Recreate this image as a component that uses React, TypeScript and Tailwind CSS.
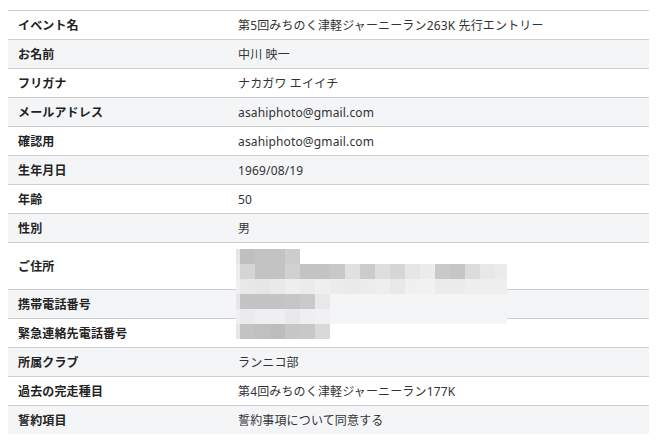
const rows: { label: string; value: string; tall?: boolean }[] = [
  { label: 'イベント名', value: '第5回みちのく津軽ジャーニーラン263K 先行エントリー' },
  { label: 'お名前', value: '中川 映一' },
  { label: 'フリガナ', value: 'ナカガワ エイイチ' },
  { label: 'メールアドレス', value: 'asahiphoto@gmail.com' },
  { label: '確認用', value: 'asahiphoto@gmail.com' },
  { label: '生年月日', value: '1969/08/19' },
  { label: '年齢', value: '50' },
  { label: '性別', value: '男' },
  { label: 'ご住所', value: '', tall: true },
  { label: '携帯電話番号', value: '' },
  { label: '緊急連絡先電話番号', value: '' },
  { label: '所属クラブ', value: 'ランニコ部' },
  { label: '過去の完走種目', value: '第4回みちのく津軽ジャーニーラン177K' },
  { label: '誓約項目', value: '誓約事項について同意する' },
];

// pixelated (blurred) personal info
const widths = [4, 15, 15, 15, 15, 15, 15, 15, 15, 15, 15, 15, 15, 15, 15, 15, 15, 15, 12];
const g = '#f4f5f7';
const mosaic: (string | null)[][] = [
  ['#e6e6e6', '#bfbfbf', '#c3c3c3', '#c3c3c3', '#cdcdcd'],
  ['#ededed', '#d5d5d5', '#c3c3c3', '#c3c3c3', '#d1d1d1', '#c4c4c4', '#c4c4c4', '#c8c8c8', '#e0e0e0', '#cbcbcb', '#dedede', '#d6d6d6', '#e6e6e6', '#ececec', '#c9c9c9', '#c6c6c6', '#dcdcdc', '#e8e8e8', '#ebebeb'],
  ['#f0f0f0', '#e8e8e8', '#e6e6e6', '#e9e9e9', '#eeeeee', '#ebebeb', '#efefef', '#ececec', '#eaeaea', '#ececec', '#eeeeee', '#e8e8e8', '#f0f0f0', '#f1f1f1', '#ebebeb', '#ebebeb', '#eeeeee', '#eeeeee', '#eeeeee'],
  ['#e6e6e8', '#c4c4c6', '#c4c4c6', '#c4c4c6', '#c6c6c8', '#cacacc', '#e8e8ea', g, g, g, g, g, g, g, g, g, g, g, g],
  ['#f0f0f2', '#ebebed', '#efeff1', '#efeff1', '#e9e9eb', '#efeff1', '#f1f1f3', g, g, g, g, g, g, g, g, g, g, g, g],
  ['#e6e6e6', '#c3c3c3', '#c0c0c0', '#bdbdbd', '#c6c6c6', '#c8c8c8', '#d9d9d9'],
];

function Mosaic() {
  return (
    <div className="absolute left-[228px] top-[239px] flex flex-col">
      {mosaic.map((r, i) => (
        <div key={i} className="flex h-[15px]">
          {r.map((c, j) => (
            <div key={j} className="h-full" style={{ width: widths[j], background: c ?? 'transparent' }} />
          ))}
        </div>
      ))}
    </div>
  );
}

export default function App() {
  return (
    <div
      className="min-h-[441px] bg-white pt-[10px] px-[8px] text-[12px] tracking-[0.15px] text-[#333]"
      style={{ fontFamily: '"Noto Sans", "Noto Sans CJK JP", sans-serif' }}
    >
      <div className="relative w-[641px]">
        {rows.map((row, i) => (
          <div
            key={row.label}
            className={`flex items-center pt-[2px] border-t border-[#cfcfcf] ${row.tall ? 'h-[47px]' : 'h-[29px]'} ${i % 2 === 1 ? 'bg-[#f4f5f7]' : 'bg-white'}`}
          >
            <div className="w-[221px] pl-[10px] font-bold text-[#222]">{row.label}</div>
            <div className="flex-1 pl-[9px]">{row.value}</div>
          </div>
        ))}
        <Mosaic />
      </div>
    </div>
  );
}
